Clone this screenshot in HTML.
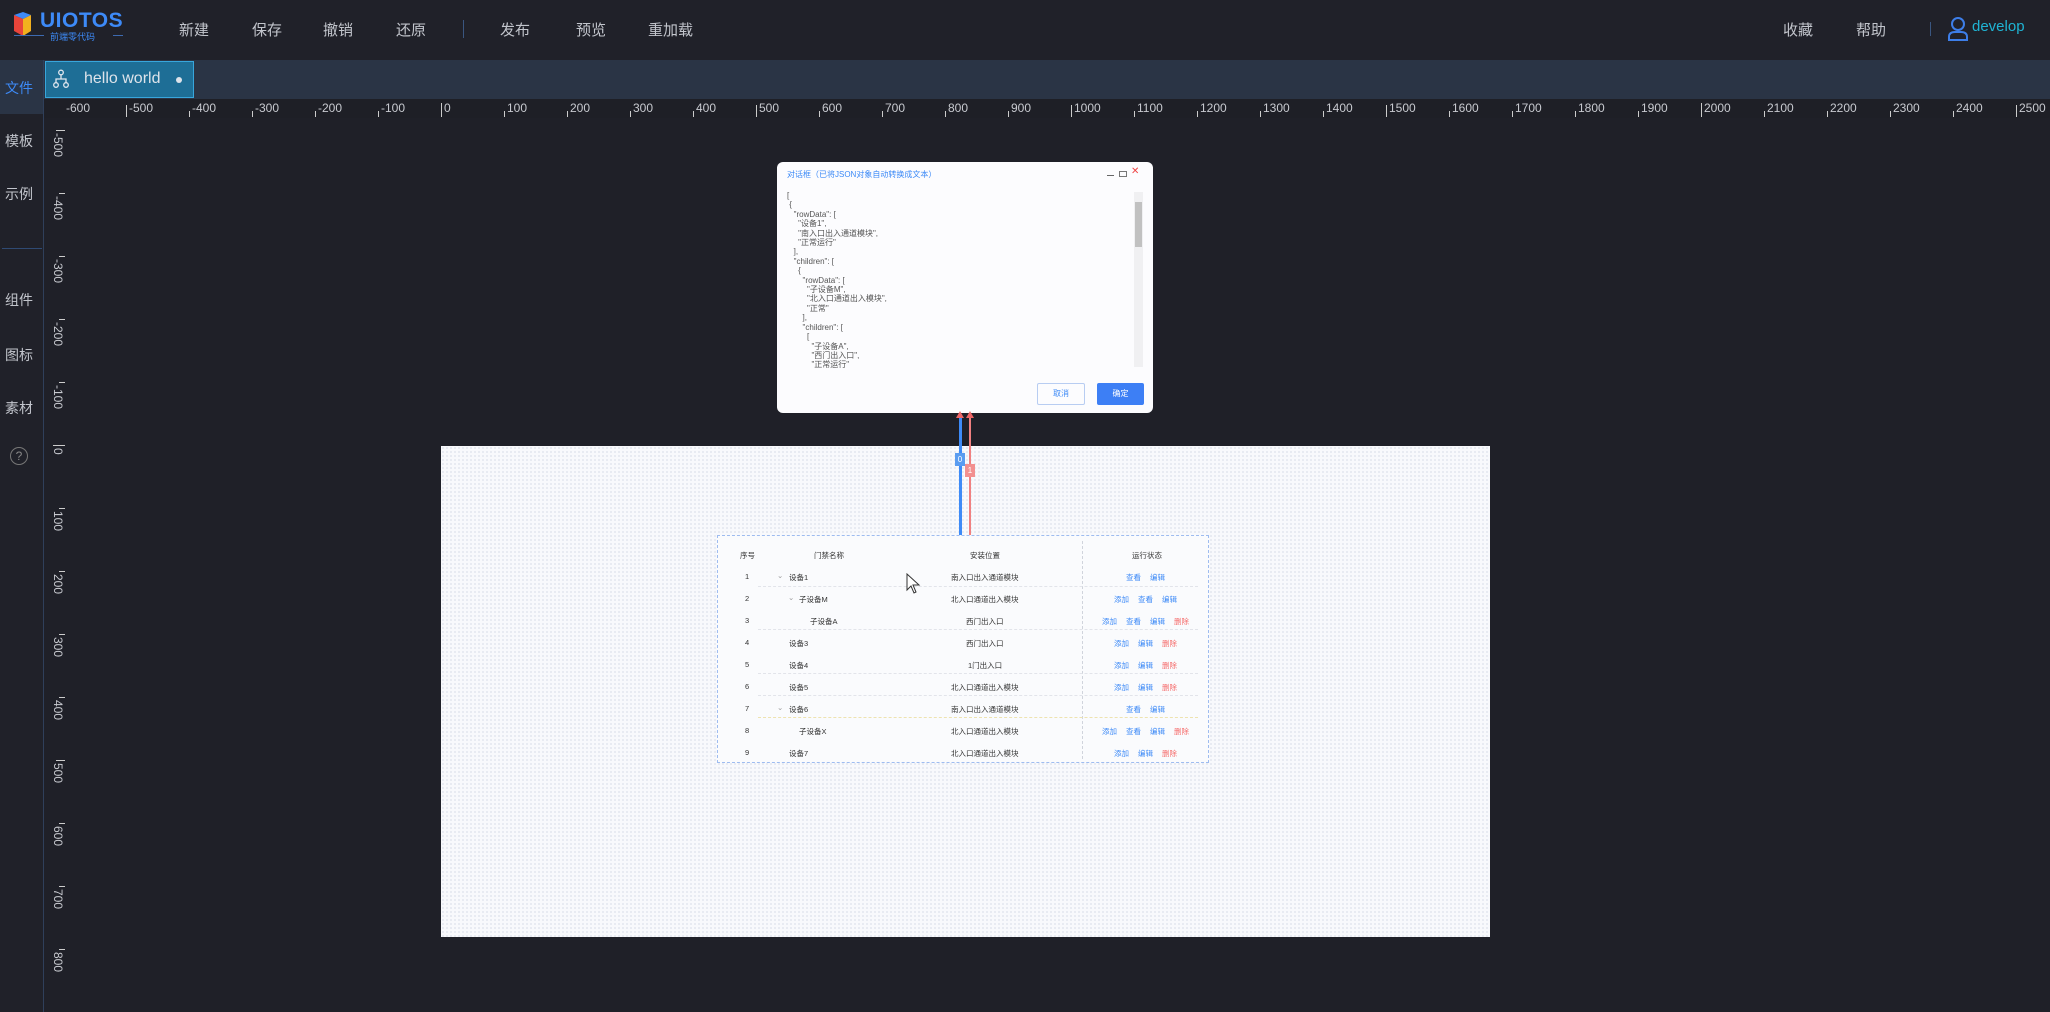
<!DOCTYPE html>
<html><head><meta charset="utf-8">
<style>
*{margin:0;padding:0;box-sizing:border-box}
body{width:2050px;height:1012px;background:#1f2028;font-family:"Liberation Sans","Noto Sans CJK SC",sans-serif;position:relative;overflow:hidden;color:#c5c8d0}
.a{position:absolute;white-space:nowrap}
.top{left:0;top:0;width:2050px;height:60px;background:#202129}
.menu{font-size:15px;color:#c2c5cc;top:19px}
.tabbar{left:44px;top:60px;width:2006px;height:39px;background:#2a3445}
.side{left:0;top:60px;width:44px;height:952px;background:#202129;border-right:1px solid #2f3f5a}
.sd{font-size:14px;color:#c2c5cc;left:5px}
.hr{font-size:12px;color:#c8cad0;top:101px}
.ht{position:absolute;top:111px;width:1px;height:6px;background:#ccc}
.vr{font-size:12px;color:#c8cad0;left:51px;writing-mode:vertical-rl}
.vt{position:absolute;left:59px;width:6px;height:1px;background:#ccc}
.canvas{left:441px;top:446px;width:1049px;height:491px;background:#f8f9fc;background-image:radial-gradient(#e3e6ef 0.8px,transparent 0.9px);background-size:4px 4px}
.dlg{left:777px;top:162px;width:376px;height:251px;background:#fcfcfe;border-radius:6px}
.js{font-size:8px;line-height:9.4px;color:#555;left:10px;top:29px;font-family:"Liberation Sans","Noto Sans CJK SC",sans-serif;white-space:pre}
.tbl{left:717px;top:535px;width:492px;height:228px;border:1px dashed #9ebcf0;background:#fafbfd}
.t{font-size:7.5px;color:#333;position:absolute;white-space:nowrap}
.b{color:#3d8af7}.r{color:#f56c6c}
</style></head><body>
<div class="a top"></div>
<svg class="a" style="left:13px;top:11px" width="19" height="26" viewBox="0 0 19 26"><path d="M1 4 L10 1 L18 4 L10 8Z" fill="#3d8af7"/><path d="M1 4 L10 8 L10 25 L1 20Z" fill="#e8443a"/><path d="M10 8 L18 4 L18 20 L10 25Z" fill="#f2b01e"/></svg>
<div class="a" style="left:40px;top:9px;font-size:21px;font-weight:bold;color:#3d8af7;letter-spacing:0.5px">UIOTOS</div>
<div class="a" style="left:14px;top:35px;width:30px;height:1px;background:#3d6ab0"></div>
<div class="a" style="left:50px;top:30px;font-size:9px;color:#3d8af7">前端零代码</div>
<div class="a" style="left:113px;top:35px;width:10px;height:1px;background:#3d6ab0"></div>
<div class="a menu" style="left:179px">新建</div>
<div class="a menu" style="left:252px">保存</div>
<div class="a menu" style="left:323px">撤销</div>
<div class="a menu" style="left:396px">还原</div>
<div class="a" style="left:463px;top:20px;width:1px;height:18px;background:#3a5680"></div>
<div class="a menu" style="left:500px">发布</div>
<div class="a menu" style="left:576px">预览</div>
<div class="a menu" style="left:648px">重加载</div>
<div class="a menu" style="left:1783px">收藏</div>
<div class="a menu" style="left:1856px">帮助</div>
<div class="a" style="left:1930px;top:22px;width:1px;height:14px;background:#3a5680"></div>
<svg class="a" style="left:1947px;top:16px" width="22" height="26" viewBox="0 0 22 26"><circle cx="11" cy="8" r="6" fill="none" stroke="#3d7ee8" stroke-width="2"/><path d="M2 24 V21 Q2 16 8 16 H14 Q20 16 20 21 V24 Z" fill="none" stroke="#3d7ee8" stroke-width="2"/></svg>
<div class="a" style="left:1972px;top:18px;font-size:15px;color:#1fb4d4">develop</div>

<div class="a tabbar"></div>
<div class="a side"></div>
<div class="a" style="left:0;top:60px;width:43px;height:54px;background:#2a3445"></div>
<div class="a sd" style="top:78px;color:#3d8af7">文件</div>
<div class="a sd" style="top:131px">模板</div>
<div class="a sd" style="top:184px">示例</div>
<div class="a" style="left:2px;top:248px;width:40px;height:1px;background:#2f4a73"></div>
<div class="a sd" style="top:290px">组件</div>
<div class="a sd" style="top:345px">图标</div>
<div class="a sd" style="top:398px">素材</div>
<div class="a" style="left:10px;top:447px;width:18px;height:18px;border:1px solid #777;border-radius:50%;font-size:12px;color:#888;text-align:center;line-height:16px">?</div>

<div class="a" style="left:45px;top:61px;width:149px;height:37px;background:#1e6e96;border:1px solid #38a6dc"></div>
<svg class="a" style="left:53px;top:69px" width="16" height="20" viewBox="0 0 16 20"><g fill="none" stroke="#e0e6ee" stroke-width="1.3"><circle cx="8" cy="3.5" r="2.3"/><circle cx="3" cy="16" r="2.3"/><circle cx="13" cy="16" r="2.3"/><path d="M8 6V10M3 13.7V10H13V13.7"/></g></svg>
<div class="a" style="left:84px;top:70px;font-size:16px;color:#dde3ea">hello world</div>
<div class="a" style="left:176px;top:77px;width:6px;height:6px;border-radius:50%;background:#dde3ea"></div>

<div class="a" style="left:44px;top:99px;width:2006px;height:19px;background:#1e1f26"></div>
<div class="a hr" style="left:66px">-600</div>
<div class="ht" style="left:126px;height:12px;top:105px"></div><div class="a hr" style="left:129px">-500</div>
<div class="ht" style="left:189px"></div><div class="a hr" style="left:192px">-400</div>
<div class="ht" style="left:252px"></div><div class="a hr" style="left:255px">-300</div>
<div class="ht" style="left:315px"></div><div class="a hr" style="left:318px">-200</div>
<div class="ht" style="left:378px"></div><div class="a hr" style="left:381px">-100</div>
<div class="ht" style="left:441px;height:14px;top:103px"></div><div class="a hr" style="left:444px">0</div>
<div class="ht" style="left:504px"></div><div class="a hr" style="left:507px">100</div>
<div class="ht" style="left:567px"></div><div class="a hr" style="left:570px">200</div>
<div class="ht" style="left:630px"></div><div class="a hr" style="left:633px">300</div>
<div class="ht" style="left:693px"></div><div class="a hr" style="left:696px">400</div>
<div class="ht" style="left:756px;height:12px;top:105px"></div><div class="a hr" style="left:759px">500</div>
<div class="ht" style="left:819px"></div><div class="a hr" style="left:822px">600</div>
<div class="ht" style="left:882px"></div><div class="a hr" style="left:885px">700</div>
<div class="ht" style="left:945px"></div><div class="a hr" style="left:948px">800</div>
<div class="ht" style="left:1008px"></div><div class="a hr" style="left:1011px">900</div>
<div class="ht" style="left:1071px;height:12px;top:105px"></div><div class="a hr" style="left:1074px">1000</div>
<div class="ht" style="left:1134px"></div><div class="a hr" style="left:1137px">1100</div>
<div class="ht" style="left:1197px"></div><div class="a hr" style="left:1200px">1200</div>
<div class="ht" style="left:1260px"></div><div class="a hr" style="left:1263px">1300</div>
<div class="ht" style="left:1323px"></div><div class="a hr" style="left:1326px">1400</div>
<div class="ht" style="left:1386px;height:12px;top:105px"></div><div class="a hr" style="left:1389px">1500</div>
<div class="ht" style="left:1449px"></div><div class="a hr" style="left:1452px">1600</div>
<div class="ht" style="left:1512px"></div><div class="a hr" style="left:1515px">1700</div>
<div class="ht" style="left:1575px"></div><div class="a hr" style="left:1578px">1800</div>
<div class="ht" style="left:1638px"></div><div class="a hr" style="left:1641px">1900</div>
<div class="ht" style="left:1701px;height:14px;top:103px"></div><div class="a hr" style="left:1704px">2000</div>
<div class="ht" style="left:1764px"></div><div class="a hr" style="left:1767px">2100</div>
<div class="ht" style="left:1827px"></div><div class="a hr" style="left:1830px">2200</div>
<div class="ht" style="left:1890px"></div><div class="a hr" style="left:1893px">2300</div>
<div class="ht" style="left:1953px"></div><div class="a hr" style="left:1956px">2400</div>
<div class="ht" style="left:2016px;height:12px;top:105px"></div><div class="a hr" style="left:2019px">2500</div>

<div class="vt" style="top:130px;width:9px;left:56px"></div><div class="a vr" style="top:133px">-500</div>
<div class="vt" style="top:193px"></div><div class="a vr" style="top:196px">-400</div>
<div class="vt" style="top:256px"></div><div class="a vr" style="top:259px">-300</div>
<div class="vt" style="top:319px"></div><div class="a vr" style="top:322px">-200</div>
<div class="vt" style="top:382px"></div><div class="a vr" style="top:385px">-100</div>
<div class="vt" style="top:445px;width:12px;left:53px"></div><div class="a vr" style="top:448px">0</div>
<div class="vt" style="top:508px"></div><div class="a vr" style="top:511px">100</div>
<div class="vt" style="top:571px"></div><div class="a vr" style="top:574px">200</div>
<div class="vt" style="top:634px"></div><div class="a vr" style="top:637px">300</div>
<div class="vt" style="top:697px"></div><div class="a vr" style="top:700px">400</div>
<div class="vt" style="top:760px;width:9px;left:56px"></div><div class="a vr" style="top:763px">500</div>
<div class="vt" style="top:823px"></div><div class="a vr" style="top:826px">600</div>
<div class="vt" style="top:886px"></div><div class="a vr" style="top:889px">700</div>
<div class="vt" style="top:949px"></div><div class="a vr" style="top:952px">800</div>

<div class="a canvas"></div>

<div class="a dlg">
  <div class="a" style="left:10px;top:7px;font-size:8px;color:#3d8af7">对话框（已将JSON对象自动转换成文本）</div>
  <div class="a" style="left:330px;top:13px;width:7px;height:1px;background:#666"></div>
  <div class="a" style="left:342px;top:9px;width:8px;height:6px;border:1px solid #777"></div>
  <div class="a" style="left:354px;top:4px;font-size:10px;color:#e44">✕</div>
<pre class="a js">[
 {
   "rowData": [
     "设备1",
     "南入口出入通道模块",
     "正常运行"
   ],
   "children": [
     {
       "rowData": [
         "子设备M",
         "北入口通道出入模块",
         "正常"
       ],
       "children": [
         [
           "子设备A",
           "西门出入口",
           "正常运行"</pre>
  <div class="a" style="left:357px;top:30px;width:9px;height:175px;background:#f0f0f2"></div>
  <div class="a" style="left:358px;top:40px;width:7px;height:45px;background:#c1c1c1"></div>
  <div class="a" style="left:260px;top:221px;width:48px;height:22px;border:1px solid #b8cdf2;border-radius:2px;font-size:8px;color:#3d8af7;text-align:center;line-height:20px">取消</div>
  <div class="a" style="left:320px;top:221px;width:47px;height:22px;background:#3d7ff5;border-radius:2px;font-size:8px;color:#fff;text-align:center;line-height:22px">确定</div>
</div>

<div class="a" style="left:959px;top:414px;width:3px;height:121px;background:#3d8af7"></div>
<div class="a" style="left:969px;top:414px;width:2px;height:121px;background:#f08080"></div>
<div class="a" style="left:956px;top:411px;border:4px solid transparent;border-bottom:7px solid #e66;border-top:0"></div>
<div class="a" style="left:966px;top:411px;border:4px solid transparent;border-bottom:7px solid #e66;border-top:0"></div>
<div class="a" style="left:955px;top:453px;width:10px;height:13px;background:#5a9cf0;font-size:8px;color:#fff;text-align:center;line-height:13px">0</div>
<div class="a" style="left:965px;top:464px;width:10px;height:13px;background:#f29090;font-size:8px;color:#fff;text-align:center;line-height:13px">1</div>

<div class="a tbl">
  <div class="a" style="left:364px;top:5px;width:0;height:218px;border-left:1px dashed #d0d4dc"></div>
  <div class="a" style="left:40px;top:50px;width:440px;border-top:1px dashed #e2e4ea"></div>
  <div class="a" style="left:40px;top:93px;width:440px;border-top:1px dashed #e2e4ea"></div>
  <div class="a" style="left:40px;top:137px;width:440px;border-top:1px dashed #e2e4ea"></div>
  <div class="a" style="left:40px;top:159px;width:440px;border-top:1px dashed #e2e4ea"></div>
  <div class="a" style="left:40px;top:181px;width:440px;border-top:1px dashed #eee3b0"></div>
</div>
<div class="t" style="left:740px;top:550px">序号</div>
<div class="t" style="left:814px;top:550px">门禁名称</div>
<div class="t" style="left:970px;top:550px">安装位置</div>
<div class="t" style="left:1132px;top:550px">运行状态</div>

<div class="t" style="left:745px;top:572px">1</div><div class="t" style="left:777px;top:571px;color:#999">⌄</div><div class="t" style="left:789px;top:572px">设备1</div><div class="t" style="left:951px;top:572px">南入口出入通道模块</div><div class="t b" style="left:1126px;top:572px">查看</div><div class="t b" style="left:1150px;top:572px">编辑</div>
<div class="t" style="left:745px;top:594px">2</div><div class="t" style="left:788px;top:593px;color:#999">⌄</div><div class="t" style="left:799px;top:594px">子设备M</div><div class="t" style="left:951px;top:594px">北入口通道出入模块</div><div class="t b" style="left:1114px;top:594px">添加</div><div class="t b" style="left:1138px;top:594px">查看</div><div class="t b" style="left:1162px;top:594px">编辑</div>
<div class="t" style="left:745px;top:616px">3</div><div class="t" style="left:810px;top:616px">子设备A</div><div class="t" style="left:966px;top:616px">西门出入口</div><div class="t b" style="left:1102px;top:616px">添加</div><div class="t b" style="left:1126px;top:616px">查看</div><div class="t b" style="left:1150px;top:616px">编辑</div><div class="t r" style="left:1174px;top:616px">删除</div>
<div class="t" style="left:745px;top:638px">4</div><div class="t" style="left:789px;top:638px">设备3</div><div class="t" style="left:966px;top:638px">西门出入口</div><div class="t b" style="left:1114px;top:638px">添加</div><div class="t b" style="left:1138px;top:638px">编辑</div><div class="t r" style="left:1162px;top:638px">删除</div>
<div class="t" style="left:745px;top:660px">5</div><div class="t" style="left:789px;top:660px">设备4</div><div class="t" style="left:968px;top:660px">1门出入口</div><div class="t b" style="left:1114px;top:660px">添加</div><div class="t b" style="left:1138px;top:660px">编辑</div><div class="t r" style="left:1162px;top:660px">删除</div>
<div class="t" style="left:745px;top:682px">6</div><div class="t" style="left:789px;top:682px">设备5</div><div class="t" style="left:951px;top:682px">北入口通道出入模块</div><div class="t b" style="left:1114px;top:682px">添加</div><div class="t b" style="left:1138px;top:682px">编辑</div><div class="t r" style="left:1162px;top:682px">删除</div>
<div class="t" style="left:745px;top:704px">7</div><div class="t" style="left:777px;top:703px;color:#999">⌄</div><div class="t" style="left:789px;top:704px">设备6</div><div class="t" style="left:951px;top:704px">南入口出入通道模块</div><div class="t b" style="left:1126px;top:704px">查看</div><div class="t b" style="left:1150px;top:704px">编辑</div>
<div class="t" style="left:745px;top:726px">8</div><div class="t" style="left:799px;top:726px">子设备X</div><div class="t" style="left:951px;top:726px">北入口通道出入模块</div><div class="t b" style="left:1102px;top:726px">添加</div><div class="t b" style="left:1126px;top:726px">查看</div><div class="t b" style="left:1150px;top:726px">编辑</div><div class="t r" style="left:1174px;top:726px">删除</div>
<div class="t" style="left:745px;top:748px">9</div><div class="t" style="left:789px;top:748px">设备7</div><div class="t" style="left:951px;top:748px">北入口通道出入模块</div><div class="t b" style="left:1114px;top:748px">添加</div><div class="t b" style="left:1138px;top:748px">编辑</div><div class="t r" style="left:1162px;top:748px">删除</div>

<svg class="a" style="left:906px;top:573px" width="16" height="22" viewBox="0 0 16 22"><path d="M1 1 L1 17 L5 13 L8 20 L10 19 L7 12 L13 12 Z" fill="#fff" stroke="#333" stroke-width="1"/></svg>
</body></html>
